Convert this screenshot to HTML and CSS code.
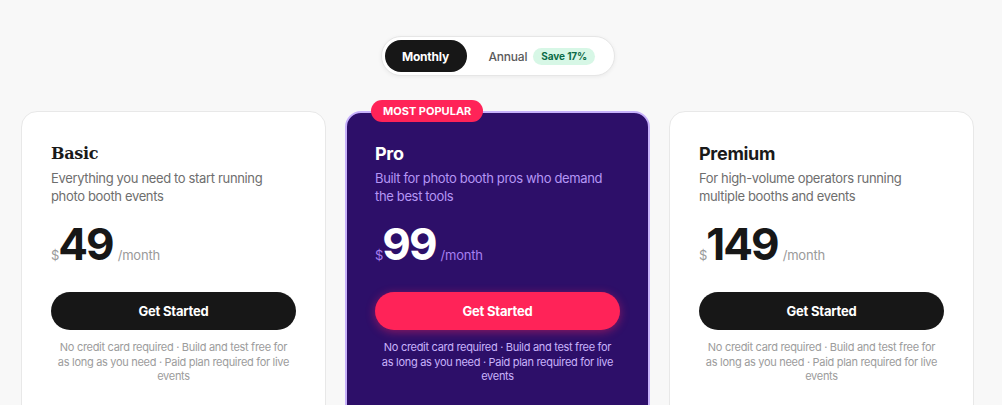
FILE: index.html
```html
<!DOCTYPE html>
<html>
<head>
<meta charset="utf-8">
<link rel="stylesheet" href="styles.css">
</head>
<body>
<div class="page">
  <div class="toggle-wrap">
    <div class="toggle">
      <button class="tog active">Monthly</button>
      <button class="tog">Annual <span class="save">Save 17%</span></button>
    </div>
  </div>
  <div class="cards">
    <div class="card">
      <h3 class="title serif">Basic</h3>
      <p class="desc">Everything you need to start running photo booth events</p>
      <div class="price"><span class="cur">$</span><span class="amt">49</span><span class="per">/month</span></div>
      <button class="cta">Get Started</button>
      <p class="note">No credit card required · Build and test free for as long as you need · Paid plan required for live events</p>
    </div>
    <div class="card pro">
      <span class="badge">MOST POPULAR</span>
      <h3 class="title">Pro</h3>
      <p class="desc">Built for photo booth pros who demand the best tools</p>
      <div class="price"><span class="cur">$</span><span class="amt">99</span><span class="per">/month</span></div>
      <button class="cta">Get Started</button>
      <p class="note">No credit card required · Build and test free for as long as you need · Paid plan required for live events</p>
    </div>
    <div class="card">
      <h3 class="title">Premium</h3>
      <p class="desc">For high-volume operators running multiple booths and events</p>
      <div class="price"><span class="cur">$</span><span class="amt">149</span><span class="per">/month</span></div>
      <button class="cta">Get Started</button>
      <p class="note">No credit card required · Build and test free for as long as you need · Paid plan required for live events</p>
    </div>
  </div>
</div>
</body>
</html>
```
FILE: styles.css
```css
* { box-sizing: border-box; }
html, body { margin: 0; padding: 0; }
body {
  background: #f8f8f8;
  font-family: "Inter", "Noto Sans", sans-serif;
  color: #1a1a1a;
  height: 405px;
  overflow: hidden;
}
.page { padding-top: 36px; width: 995px; }
.toggle-wrap { display: flex; justify-content: center; }
.toggle {
  display: flex;
  align-items: center;
  gap: 4px;
  background: #fff;
  border: 1px solid #e6e6e6;
  border-radius: 999px;
  padding: 3px;
  box-shadow: 0 1px 4px rgba(0,0,0,0.06);
  height: 40px;
  width: 234px;
}
.tog {
  border: 0;
  background: transparent;
  font-family: inherit;
  font-size: 12px;
  font-weight: 500;
  letter-spacing: -0.2px;
  color: #5a5a5a;
  height: 32px;
  border-radius: 999px;
  padding: 0 0 0 18px;
  display: flex;
  align-items: center;
  gap: 6px;
  white-space: nowrap;
  cursor: pointer;
}
.tog.active {
  background: #171717;
  color: #fff;
  font-weight: 700;
  width: 82px;
  padding: 0;
  justify-content: center;
}
.save {
  background: #d7f7e6;
  color: #0b6b47;
  font-size: 10px;
  font-weight: 700;
  letter-spacing: -0.1px;
  padding: 3px 8px;
  border-radius: 999px;
  line-height: 11px;
  white-space: nowrap;
}
.cards {
  display: flex;
  gap: 19px;
  justify-content: center;
  margin-top: 35px;
}
.card {
  position: relative;
  width: 305px;
  height: 320px;
  background: #fff;
  border: 1px solid #e8e8e8;
  border-radius: 16px;
  padding: 30px 29px 0;
  flex: none;
}
.card.pro {
  background: #2d0f69;
  border: 2px solid #c7b1fb;
  padding: 29px 28px 0;
}
.badge {
  position: absolute;
  top: -13px;
  left: 24px;
  background: #ff2358;
  color: #fff;
  font-size: 11px;
  font-weight: 700;
  height: 22px;
  line-height: 22px;
  padding: 0 12px;
  border-radius: 999px;
}
.title {
  margin: 0;
  font-size: 18px;
  font-weight: 700;
  letter-spacing: -0.3px;
  line-height: 24px;
  color: #1a1a1a;
}
.title.serif { font-family: "DejaVu Serif", serif; font-size: 16px; font-weight: 800; letter-spacing: -0.3px; }
.pro .title { color: #fff; }
.desc {
  margin: 3px 0 0;
  font-size: 13px;
  letter-spacing: -0.35px;
  line-height: 18px;
  color: #6e6e6e;
  width: 245px;
}
.pro .desc { color: #b596f5; }
.price {
  display: flex;
  align-items: baseline;
  margin-top: 14px;
  height: 50px;
}
.cur { font-size: 13px; color: #9a9a9a; margin-right: -1px; }
.amt { font-size: 44px; font-weight: 700; letter-spacing: -2px; line-height: 50px; color: #171717; }
.per { font-size: 13px; color: #9a9a9a; margin-left: 5px; letter-spacing: -0.2px; }
.pro .cur, .pro .per { color: #a67ff0; }
.pro .amt { color: #fff; }
.cta {
  display: block;
  width: 245px;
  height: 38px;
  margin-top: 23px;
  border: 0;
  border-radius: 999px;
  background: #171717;
  color: #fff;
  font-family: inherit;
  font-size: 13px;
  font-weight: 700;
  letter-spacing: -0.2px;
}
.pro .cta {
  background: #ff2358;
  box-shadow: 0 2px 10px rgba(255, 35, 88, 0.45);
}
.note {
  margin: 10px 0 0;
  padding: 0 3px;
  font-size: 11px;
  letter-spacing: -0.3px;
  line-height: 14.5px;
  color: #9c9c9c;
  text-align: center;
  width: 245px;
}
.pro .note { color: #c9b3fb; }
```
